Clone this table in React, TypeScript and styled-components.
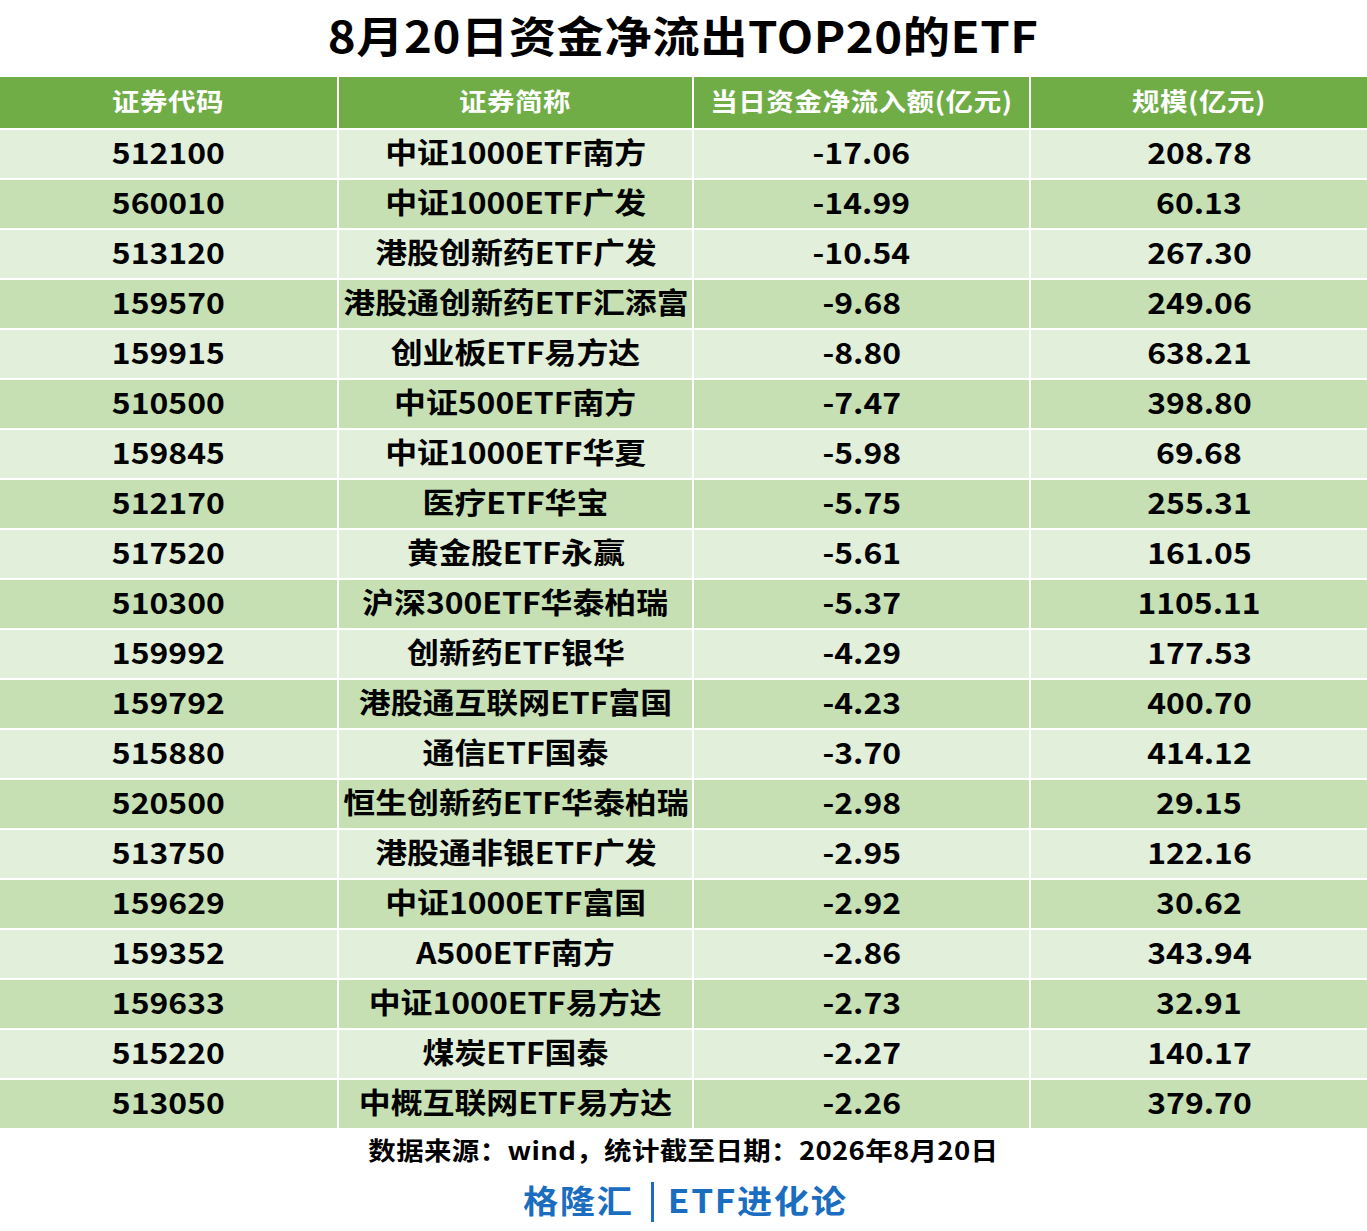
import styled, { createGlobalStyle } from 'styled-components';

const GlobalStyle = createGlobalStyle`
    html, body {
        margin: 0;
        padding: 0;
        background: #ffffff;
    }
    body {
        font-family: "Noto Sans CJK SC", "Noto Sans", sans-serif;
        color: #000000;
    }
`;

const Page = styled.div`
    width: 1367px;
    height: 1231px;
    display: flex;
    flex-direction: column;
    overflow: hidden;
`;

// the source picture is a little wider than the font draws, so every label is stretched
const Wide = styled.span`
    display: inline-block;
    white-space: nowrap;
    transform: scaleX(1.1);
    transform-origin: center;
`;

const Title = styled.h1`
    margin: 0;
    height: 77px;
    display: flex;
    align-items: center;
    justify-content: center;
    font-size: 43px;
    font-weight: 700;
    letter-spacing: 0.5px;
    line-height: 1;
    padding-bottom: 8px;
    box-sizing: border-box;
`;

const Table = styled.div`
    display: flex;
    flex-direction: column;
`;

const Row = styled.div<{ $tone: 'head' | 'light' | 'dark' }>`
    display: grid;
    grid-template-columns: 337px 355px 337px 1fr;
    height: ${p => (p.$tone === 'head' ? '51px' : '50px')};
    box-sizing: border-box;
    border-top: ${p => (p.$tone === 'head' ? '0' : '2px solid #ffffff')};
    background: ${p => (p.$tone === 'head' ? '#70ad47' : p.$tone === 'light' ? '#e2efda' : '#c6e0b4')};
    color: ${p => (p.$tone === 'head' ? '#ffffff' : '#000000')};
`;

const Cell = styled.div<{ $head?: boolean }>`
    display: flex;
    align-items: center;
    justify-content: center;
    border-left: 2px solid #ffffff;
    padding-bottom: 5px;
    box-sizing: border-box;
    font-size: ${p => (p.$head ? '25px' : '29px')};
    font-weight: 700;
    letter-spacing: ${p => (p.$head ? '0.5px' : '0')};
    line-height: 1;
    &:first-child {
        border-left: 0;
    }
`;

const Source = styled.div`
    height: 46px;
    display: flex;
    align-items: center;
    justify-content: center;
    padding-bottom: 4px;
    box-sizing: border-box;
    font-size: 25px;
    font-weight: 700;
    letter-spacing: 0.3px;
    line-height: 1;
`;

const Brand = styled.div`
    height: 50px;
    display: flex;
    align-items: center;
    justify-content: center;
    gap: 22px;
    font-size: 32px;
    font-weight: 700;
    letter-spacing: 1.5px;
    line-height: 1;
    color: #1a6dbf;
`;

const Divider = styled.span`
    width: 3px;
    height: 40px;
    margin-top: 6px;
    background: #1a6dbf;
`;

const rows: readonly (readonly string[])[] = [
    ['512100', '中证1000ETF南方', '-17.06', '208.78'],
    ['560010', '中证1000ETF广发', '-14.99', '60.13'],
    ['513120', '港股创新药ETF广发', '-10.54', '267.30'],
    ['159570', '港股通创新药ETF汇添富', '-9.68', '249.06'],
    ['159915', '创业板ETF易方达', '-8.80', '638.21'],
    ['510500', '中证500ETF南方', '-7.47', '398.80'],
    ['159845', '中证1000ETF华夏', '-5.98', '69.68'],
    ['512170', '医疗ETF华宝', '-5.75', '255.31'],
    ['517520', '黄金股ETF永赢', '-5.61', '161.05'],
    ['510300', '沪深300ETF华泰柏瑞', '-5.37', '1105.11'],
    ['159992', '创新药ETF银华', '-4.29', '177.53'],
    ['159792', '港股通互联网ETF富国', '-4.23', '400.70'],
    ['515880', '通信ETF国泰', '-3.70', '414.12'],
    ['520500', '恒生创新药ETF华泰柏瑞', '-2.98', '29.15'],
    ['513750', '港股通非银ETF广发', '-2.95', '122.16'],
    ['159629', '中证1000ETF富国', '-2.92', '30.62'],
    ['159352', 'A500ETF南方', '-2.86', '343.94'],
    ['159633', '中证1000ETF易方达', '-2.73', '32.91'],
    ['515220', '煤炭ETF国泰', '-2.27', '140.17'],
    ['513050', '中概互联网ETF易方达', '-2.26', '379.70'],
];

const headers = ['证券代码', '证券简称', '当日资金净流入额(亿元)', '规模(亿元)'];

export default function App() {
    return (
        <Page>
            <GlobalStyle />
            <Title><Wide>8月20日资金净流出TOP20的ETF</Wide></Title>
            <Table>
                <Row $tone='head'>
                    {headers.map(h => <Cell key={h} $head><Wide>{h}</Wide></Cell>)}
                </Row>
                {rows.map((r, i) => (
                    <Row key={r[0]} $tone={i % 2 === 0 ? 'light' : 'dark'}>
                        {r.map((c, j) => <Cell key={j}><Wide>{c}</Wide></Cell>)}
                    </Row>
                ))}
            </Table>
            <Source><Wide>数据来源：wind，统计截至日期：2026年8月20日</Wide></Source>
            <Brand>
                <Wide>格隆汇</Wide>
                <Divider />
                <Wide>ETF进化论</Wide>
            </Brand>
        </Page>
    );
}
